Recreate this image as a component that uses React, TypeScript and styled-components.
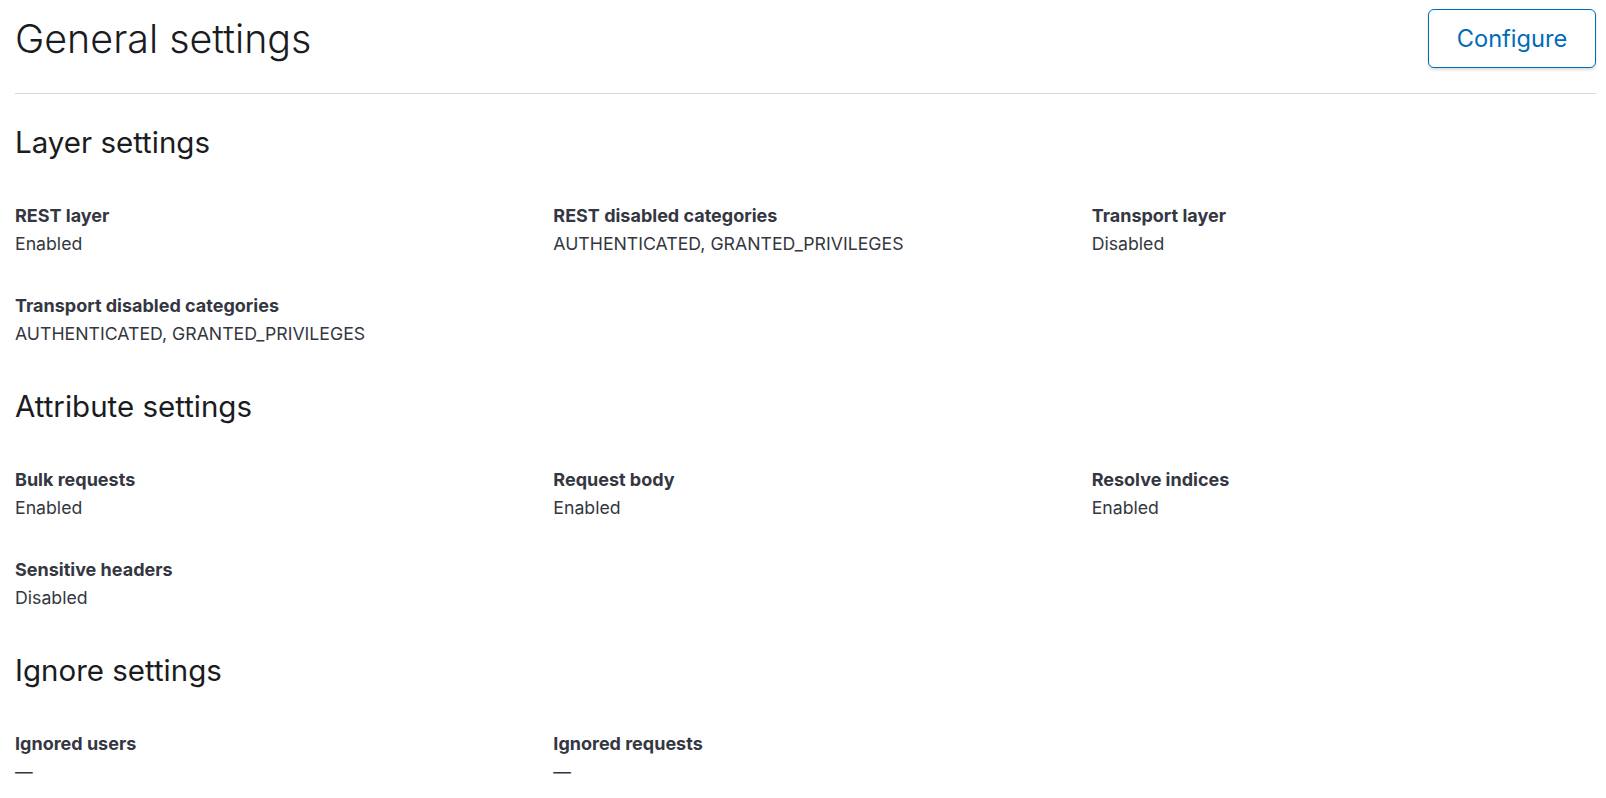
import React from 'react';
import styled, { createGlobalStyle } from 'styled-components';

const GlobalStyle = createGlobalStyle`
    body {
        margin: 0;
        background: #fff;
        font-family: Inter, "Noto Sans", sans-serif;
        color: #343741;
    }
`;

interface ISetting {
    name: string;
    value: string;
}

interface ISection {
    title: string;
    settings: ISetting[];
}

const sections: ISection[] = [
    {
        title: 'Layer settings',
        settings: [
            { name: 'REST layer', value: 'Enabled' },
            { name: 'REST disabled categories', value: 'AUTHENTICATED, GRANTED_PRIVILEGES' },
            { name: 'Transport layer', value: 'Disabled' },
            { name: 'Transport disabled categories', value: 'AUTHENTICATED, GRANTED_PRIVILEGES' },
        ],
    },
    {
        title: 'Attribute settings',
        settings: [
            { name: 'Bulk requests', value: 'Enabled' },
            { name: 'Request body', value: 'Enabled' },
            { name: 'Resolve indices', value: 'Enabled' },
            { name: 'Sensitive headers', value: 'Disabled' },
        ],
    },
    {
        title: 'Ignore settings',
        settings: [
            { name: 'Ignored users', value: '—' },
            { name: 'Ignored requests', value: '—' },
        ],
    },
];

const App = () => {
    return (
        <Page>
            <GlobalStyle />
            <Header>
                <Title>General settings</Title>
                <ConfigureButton>Configure</ConfigureButton>
            </Header>
            <Rule />
            {sections.map((section) => (
                <Section key={section.title}>
                    <SectionTitle>{section.title}</SectionTitle>
                    <Grid>
                        {section.settings.map((setting) => (
                            <Item key={setting.name}>
                                <Label>{setting.name}</Label>
                                <Value>{setting.value}</Value>
                            </Item>
                        ))}
                    </Grid>
                </Section>
            ))}
        </Page>
    );
};

const Page = styled.div`
    padding: 9px 10px 0 15px;
`;
const Header = styled.div`
    display: flex;
    justify-content: space-between;
    align-items: center;
`;
const Title = styled.h1`
    margin: 0;
    font-size: 39.4px;
    line-height: 44px;
    font-weight: 300;
    color: #1a1c21;
`;
const ConfigureButton = styled.button`
    width: 168px;
    height: 59px;
    border: 1px solid #006bb8;
    border-radius: 6px;
    background: #fff;
    color: #006bb8;
    font-family: Inter, "Noto Sans", sans-serif;
    font-size: 23.6px;
    font-weight: 400;
    box-shadow: 0 2px 3px rgba(0, 0, 0, 0.15);
    cursor: pointer;
`;
const Rule = styled.div`
    height: 1px;
    margin-top: 25px;
    background: #d3dae6;
`;
const Section = styled.section`
    padding-top: 30px;
    & + & {
        padding-top: 42px;
    }
`;
const SectionTitle = styled.h2`
    margin: 0 0 44px;
    font-size: 29.5px;
    line-height: 36px;
    font-weight: 400;
    color: #1a1c21;
`;
const Grid = styled.div`
    display: grid;
    grid-template-columns: repeat(3, 1fr);
    column-gap: 34px;
    row-gap: 38px;
`;
const Item = styled.div`
    display: flex;
    flex-direction: column;
    gap: 4px;
`;
const Label = styled.div`
    font-size: 18px;
    line-height: 24px;
    font-weight: 700;
    color: #343741;
`;
const Value = styled.div`
    font-size: 17.7px;
    line-height: 24px;
    font-weight: 400;
    color: #343741;
`;

export default App;
